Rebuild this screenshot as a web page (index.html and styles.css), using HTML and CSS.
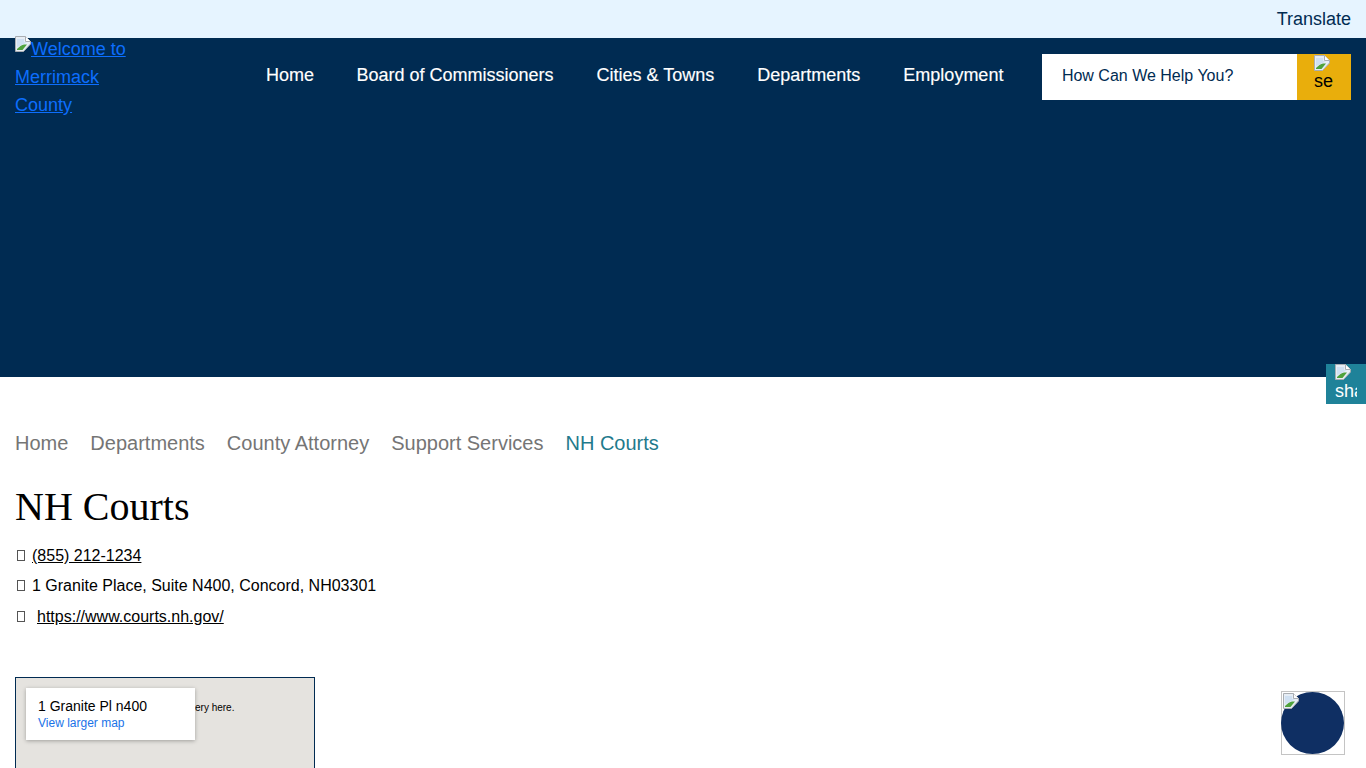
FILE: index.html
```html
<!DOCTYPE html>
<html lang="en">
<head>
<meta charset="utf-8">
<title>NH Courts</title>
<link rel="stylesheet" href="styles.css">
</head>
<body>
<svg width="0" height="0" class="defs" aria-hidden="true"><defs>
<symbol id="broken" viewBox="0 0 16 16">
<path d="M.5.5H10.5L15.5 5.5V8L8.5 15.5H.5Z" fill="#e6edf5" stroke="#a9adb2"/>
<path d="M10.5 .5V5.5H15.5" fill="#fff" stroke="#a9adb2"/>
<path d="M2 14V13L6 9.5 9 8.5 12 8.5 7.5 14Z" fill="#4fa23c"/>
<path d="M2 11V3H9V6H12L6 9.5Z" fill="#cfe0f2"/>
</symbol>
</defs></svg>
<div class="topbar"><a class="translate">Translate</a></div>
<header class="hero">
  <a class="logo" href="#"><svg class="bi"><use href="#broken"/></svg>Welcome to Merrimack County</a>
  <nav class="nav">
    <a>Home</a><a>Board of Commissioners</a><a>Cities &amp; Towns</a><a>Departments</a><a>Employment</a>
  </nav>
  <div class="search">
    <div class="search-input">How Can We Help You?</div>
    <div class="search-btn"><svg class="bi"><use href="#broken"/></svg><span>se</span></div>
  </div>
</header>
<main class="content">
  <nav class="crumbs">
    <a>Home</a><a>Departments</a><a>County Attorney</a><a>Support Services</a><a class="current">NH Courts</a>
  </nav>
  <h1>NH Courts</h1>
  <p class="info first"><i class="tofu"></i><a href="#">(855) 212-1234</a></p>
  <p class="info second"><i class="tofu"></i>1 Granite Place, Suite N400, Concord, NH03301</p>
  <p class="info third"><i class="tofu wide"></i><a href="#">https://www.courts.nh.gov/</a></p>
  <div class="map">
    <span class="map-msg">ery here.</span>
    <div class="map-card">
      <div class="map-name">1 Granite Pl n400</div>
      <a class="map-link">View larger map</a>
    </div>
  </div>
</main>
<div class="share"><svg class="bi"><use href="#broken"/></svg><span>sha</span></div>
<div class="chat"><div class="chat-dot"></div><svg class="bi"><use href="#broken"/></svg></div>
</body>
</html>
```
FILE: styles.css
```css
* { box-sizing: border-box; }
html, body { margin: 0; height: 768px; overflow: hidden; }
body { font-family: "Liberation Sans", Arial, sans-serif; position: relative; background: #fff; color: #000; }
.defs { position: absolute; }
.bi { width: 16px; height: 16px; display: inline-block; vertical-align: baseline; flex: none; }

.topbar { height: 38px; background: #e6f4ff; display: flex; justify-content: flex-end; align-items: center; padding-right: 15px; }
.translate { font-size: 18px; color: #002b52; }

.hero { height: 339px; background: #002b52; display: flex; align-items: flex-start; padding-left: 15px; }
.logo { width: 130px; margin-top: -3px; font-size: 18px; line-height: 28px; color: #0d6efd; text-decoration: underline; }
.logo .bi { vertical-align: 3px; }
.nav { display: flex; gap: 43px; margin-left: 121px; margin-top: 26px; font-size: 18px; line-height: 22px; color: #fff; -webkit-text-stroke: 0.15px #fff; }
.nav a:nth-child(2) { margin-left: -0.5px; }
.search { display: flex; margin-left: 38.5px; margin-top: 16px; height: 46px; }
.search-input { width: 255px; background: #fff; color: #002b52; font-size: 16px; line-height: 43px; padding-left: 20px; }
.search-btn { width: 54px; background: #e9ae0c; color: #000; font-size: 18px; overflow: hidden; line-height: 20px; padding: 1px 0 0 17px; }
.search-btn .bi { display: block; }
.search-btn span { display: block; line-height: 22px; margin-top: -1px; }

.content { padding: 0 15px; }
.crumbs { display: flex; gap: 22px; margin-top: 54px; font-size: 20px; line-height: 24px; color: #757575; }
.crumbs .current { color: #1f7a8c; }
h1 { margin: 28px 0 0; font: 400 40px/48px "Liberation Serif", "Times New Roman", serif; }
.info { margin: 0; font-size: 16px; line-height: 24px; display: flex; align-items: center; }
.info a { color: #000; text-decoration: underline; }
.info.first { margin-top: 13px; }
.info.second { margin-top: 6px; }
.info.third { margin-top: 7px; }
.tofu { width: 8px; height: 11px; border: 1px solid #555; margin: -1px 7px 0 2px; flex: none; }
.tofu.wide { margin-right: 12px; }

.map { position: relative; width: 300px; height: 300px; margin-top: 48px; background: #e5e3df; border: 1px solid #002b52; }
.map-msg { position: absolute; top: 24px; left: 179px; font-size: 10px; line-height: 12px; }
.map-card { position: absolute; left: 10px; top: 10px; width: 169px; height: 52px; background: #fff; box-shadow: 0 1px 4px rgba(0,0,0,.3); padding: 10px 12px 0; }
.map-name { font-size: 14px; line-height: 17px; }
.map-link { display: block; font-size: 12px; line-height: 16px; color: #1a73e8; }

.share { position: absolute; right: 0; top: 364px; width: 40px; height: 40px; background: #1f8299; color: #fff; font-size: 18px; padding-left: 9px; overflow: hidden; }
.share .bi { display: block; }
.share span { display: block; width: 22px; overflow: hidden; line-height: 20px; margin-top: 1px; }
.chat { position: absolute; left: 1281px; top: 691px; width: 64px; height: 64px; border: 1px solid #c4c4c4; }
.chat .bi { position: absolute; left: 1px; top: 1px; }
.chat-dot { position: absolute; inset: 0 0 0 -1px; border-radius: 50%; background: #0f2f63; }
```
